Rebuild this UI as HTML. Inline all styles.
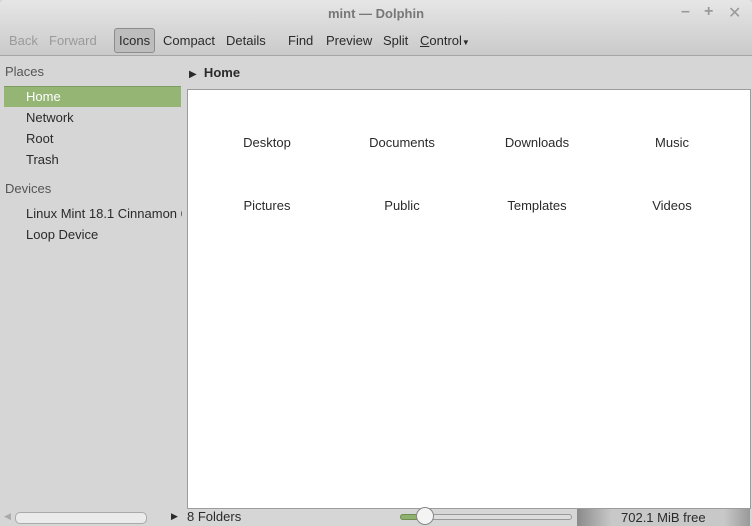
<!DOCTYPE html>
<html><head><style>
body{margin:0;width:752px;height:526px;overflow:hidden;background:#d6d6d6;font-family:"Liberation Sans","DejaVu Sans",sans-serif;font-size:13px;color:#2a2a2a;position:relative}
.a{position:absolute;white-space:nowrap}
#top{position:absolute;left:0;top:0;width:752px;height:55px;background:linear-gradient(#e6e6e6,#cacaca);border-bottom:1px solid #a6a6a6;border-radius:4px 4px 0 0}
.tb{top:33px;font-size:13px}
.g{color:#9a9a9a}
#content{position:absolute;left:187px;top:89px;width:562px;height:418px;background:#fff;border:1px solid #9c9c9c}
.it{position:absolute;width:120px;text-align:center;font-size:13px}
</style></head><body>
<div id="top"></div>
<div class="a" style="left:0;top:6px;width:752px;text-align:center;font-weight:bold;color:#777;font-size:13px">mint — Dolphin</div>
<div class="a" style="left:681px;top:3px;color:#999;font-size:16px;font-weight:bold">–</div>
<div class="a" style="left:704px;top:3px;color:#999;font-size:16px;font-weight:bold">+</div>
<div class="a" style="left:728px;top:3px;color:#999;font-size:16px;font-weight:bold">✕</div>
<div class="a" style="left:114px;top:28px;width:39px;height:23px;background:#bdbdbd;border:1px solid #8c8c8c;border-radius:3px"></div>
<div class="a tb g" style="left:9px">Back</div>
<div class="a tb g" style="left:49px">Forward</div>
<div class="a tb" style="left:119px">Icons</div>
<div class="a tb" style="left:163px">Compact</div>
<div class="a tb" style="left:226px">Details</div>
<div class="a tb" style="left:288px">Find</div>
<div class="a tb" style="left:326px">Preview</div>
<div class="a tb" style="left:383px">Split</div>
<div class="a tb" style="left:420px"><u>C</u>ontrol<span style="font-size:8px">▼</span></div>
<div class="a" style="left:5px;top:64px;color:#555">Places</div>
<div class="a" style="left:4px;top:86px;width:177px;height:20px;background:#94b574;border-top:1px solid #7d9c60"></div>
<div class="a" style="left:26px;top:89px;color:#fff">Home</div>
<div class="a" style="left:26px;top:110px">Network</div>
<div class="a" style="left:26px;top:131px">Root</div>
<div class="a" style="left:26px;top:152px">Trash</div>
<div class="a" style="left:5px;top:181px;color:#555">Devices</div>
<div class="a" style="left:26px;top:206px;width:156px;overflow:hidden">Linux Mint 18.1 Cinnamon 64-bit</div>
<div class="a" style="left:26px;top:227px">Loop Device</div>
<div class="a" style="left:189px;top:65px;font-weight:bold"><span style="font-size:10px">▶</span>&nbsp; Home</div>
<div id="content">
<div class="it" style="left:19px;top:45px">Desktop</div>
<div class="it" style="left:154px;top:45px">Documents</div>
<div class="it" style="left:289px;top:45px">Downloads</div>
<div class="it" style="left:424px;top:45px">Music</div>
<div class="it" style="left:19px;top:108px">Pictures</div>
<div class="it" style="left:154px;top:108px">Public</div>
<div class="it" style="left:289px;top:108px">Templates</div>
<div class="it" style="left:424px;top:108px">Videos</div>
</div>
<div class="a" style="left:4px;top:511px;font-size:9px;color:#aaa">◀</div>
<div class="a" style="left:15px;top:512px;width:130px;height:10px;background:#ebebeb;border:1px solid #aaa;border-radius:5px"></div>
<div class="a" style="left:171px;top:511px;font-size:9px">▶</div>
<div class="a" style="left:187px;top:509px">8 Folders</div>
<div class="a" style="left:400px;top:514px;width:170px;height:4px;background:#ddd;border:1px solid #999;border-radius:3px"></div>
<div class="a" style="left:400px;top:514px;width:22px;height:4px;background:#8fb06e;border:1px solid #6f8f50;border-radius:3px"></div>
<div class="a" style="left:416px;top:507px;width:16px;height:16px;background:#f4f4f4;border:1px solid #888;border-radius:50%"></div>
<div class="a" style="left:577px;top:509px;width:173px;height:17px;background:linear-gradient(90deg,#8a8a8a,#c8c8c8 20%,#c8c8c8 85%,#999);"></div>
<div class="a" style="left:621px;top:510px">702.1 MiB free</div>
</body></html>
